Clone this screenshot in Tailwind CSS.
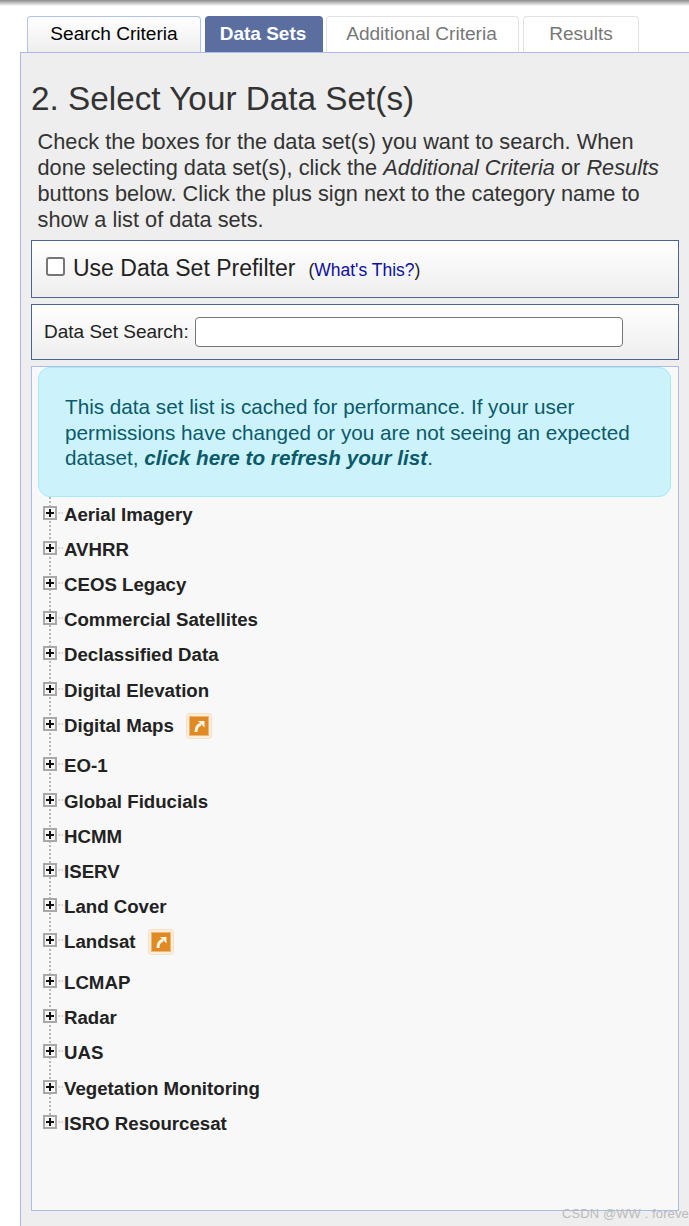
<!DOCTYPE html>
<html>
<head>
<meta charset="utf-8">
<script src="https://cdn.jsdelivr.net/npm/@tailwindcss/browser@4"></script>
</head>
<body class="bg-white font-['Liberation_Sans',Arial,sans-serif] text-[#333]">
<div class="w-[689px] h-[1226px] overflow-hidden relative bg-white">
  <div class="h-[6px] bg-gradient-to-b from-[#8c8c8c] to-white"></div>
  <div class="flex pl-[27px] mt-[10px] h-[36px] items-stretch">
    <div class="w-[174px] border border-b-0 border-[#b0c4e8] rounded-t-[4px] bg-gradient-to-b from-white to-[#eeeeee] text-[19.1px] text-black flex items-center justify-center">Search Criteria</div>
    <div class="ml-[4px] w-[118px] rounded-t-[4px] bg-[#5a6fa0] text-[19px] font-bold text-white flex items-center justify-center pr-[2px]">Data Sets</div>
    <div class="ml-[3px] w-[193px] border border-b-0 border-[#e2e2e2] rounded-t-[4px] text-[19.1px] text-[#777] flex items-center justify-center pr-[2px]">Additional Criteria</div>
    <div class="ml-[4px] w-[116px] border border-b-0 border-[#e2e2e2] rounded-t-[4px] text-[19.1px] text-[#777] flex items-center justify-center">Results</div>
  </div>
  <div class="ml-[20px] w-[669px] h-[1174px] border-l border-t border-[#a9bde6] bg-[#eeeeee] pl-[10px] pr-[10px]">
    <h1 class="text-[33.3px] leading-[38px] pt-[27px] text-[#333] m-0">2. Select Your Data Set(s)</h1>
    <p class="text-[21.75px] leading-[26px] text-[#333] pl-[6.5px] mt-[11px]">Check the boxes for the data set(s) you want to search. When done selecting data set(s), click the <i>Additional Criteria</i> or <i>Results</i> buttons below. Click the plus sign next to the category name to show a list of data sets.</p>
    <div class="mt-[7px] h-[58px] border border-[#4a6496] bg-gradient-to-b from-white to-[#eeeeee] flex items-center pl-[14px]">
      <span class="w-[19px] h-[19px] -mt-[6px] border-2 border-[#767676] rounded-[3px] bg-white"></span>
      <span class="text-[23px] ml-[8px] -mt-[2px] text-[#222]">Use Data Set Prefilter</span>
      <span class="text-[17.5px] ml-[13px] mt-[2px] text-[#222]">(<a class="text-[#0f0f9e]">What's This?</a>)</span>
    </div>
    <div class="mt-[6px] h-[56px] border border-[#4a6496] bg-gradient-to-b from-white to-[#eeeeee] flex items-center pl-[12px]">
      <span class="text-[19px] text-[#222]">Data Set Search:</span>
      <span class="ml-[6px] w-[428px] h-[30px] border border-[#767676] rounded-[4px] bg-white"></span>
    </div>
    <div class="mt-[6px] h-[845px] border border-[#a9bde6] bg-[#f8f8f8] pl-[6px] pr-[7px] relative">
      <div class="h-[130px] bg-[#ccf3fb] border border-[#a6ebf8] rounded-[12px] pl-[26px] pr-[20px] pt-[26px] text-[20.7px] leading-[25.5px] text-[#0a5a6a]">This data set list is cached for performance. If your user permissions have changed or you are not seeing an expected dataset, <b><i>click here to refresh your list</i></b>.</div>
      <div class="absolute left-[17px] top-[130px] w-0 h-[626px] border-l-2 border-dotted border-[#b5b5b5]"></div>
      <ul class="relative pl-[5px] text-[18.67px] font-bold text-[#222]">
        <li class="h-[35.2px] flex items-center"><svg class="w-[21px] h-[35px] shrink-0 -mt-[3px]" viewBox="0 0 21 35"><rect x="1" y="11" width="12" height="12" fill="#f7f7f7" stroke="#a8a8a8" stroke-width="2"/><path d="M3 17h8M7 13v8" stroke="#111" stroke-width="2"/><path d="M15.5 17h5" stroke="#aaa" stroke-dasharray="1.5 1.5"/></svg><span class="whitespace-nowrap">Aerial Imagery</span></li>
        <li class="h-[35.2px] flex items-center"><svg class="w-[21px] h-[35px] shrink-0 -mt-[3px]" viewBox="0 0 21 35"><rect x="1" y="11" width="12" height="12" fill="#f7f7f7" stroke="#a8a8a8" stroke-width="2"/><path d="M3 17h8M7 13v8" stroke="#111" stroke-width="2"/><path d="M15.5 17h5" stroke="#aaa" stroke-dasharray="1.5 1.5"/></svg><span class="whitespace-nowrap">AVHRR</span></li>
        <li class="h-[35.2px] flex items-center"><svg class="w-[21px] h-[35px] shrink-0 -mt-[3px]" viewBox="0 0 21 35"><rect x="1" y="11" width="12" height="12" fill="#f7f7f7" stroke="#a8a8a8" stroke-width="2"/><path d="M3 17h8M7 13v8" stroke="#111" stroke-width="2"/><path d="M15.5 17h5" stroke="#aaa" stroke-dasharray="1.5 1.5"/></svg><span class="whitespace-nowrap">CEOS Legacy</span></li>
        <li class="h-[35.2px] flex items-center"><svg class="w-[21px] h-[35px] shrink-0 -mt-[3px]" viewBox="0 0 21 35"><rect x="1" y="11" width="12" height="12" fill="#f7f7f7" stroke="#a8a8a8" stroke-width="2"/><path d="M3 17h8M7 13v8" stroke="#111" stroke-width="2"/><path d="M15.5 17h5" stroke="#aaa" stroke-dasharray="1.5 1.5"/></svg><span class="whitespace-nowrap">Commercial Satellites</span></li>
        <li class="h-[35.2px] flex items-center"><svg class="w-[21px] h-[35px] shrink-0 -mt-[3px]" viewBox="0 0 21 35"><rect x="1" y="11" width="12" height="12" fill="#f7f7f7" stroke="#a8a8a8" stroke-width="2"/><path d="M3 17h8M7 13v8" stroke="#111" stroke-width="2"/><path d="M15.5 17h5" stroke="#aaa" stroke-dasharray="1.5 1.5"/></svg><span class="whitespace-nowrap">Declassified Data</span></li>
        <li class="h-[35.2px] flex items-center"><svg class="w-[21px] h-[35px] shrink-0 -mt-[3px]" viewBox="0 0 21 35"><rect x="1" y="11" width="12" height="12" fill="#f7f7f7" stroke="#a8a8a8" stroke-width="2"/><path d="M3 17h8M7 13v8" stroke="#111" stroke-width="2"/><path d="M15.5 17h5" stroke="#aaa" stroke-dasharray="1.5 1.5"/></svg><span class="whitespace-nowrap">Digital Elevation</span></li>
        <li class="h-[40.7px] pb-[5.5px] flex items-center"><svg class="w-[21px] h-[35px] shrink-0 -mt-[3px]" viewBox="0 0 21 35"><rect x="1" y="11" width="12" height="12" fill="#f7f7f7" stroke="#a8a8a8" stroke-width="2"/><path d="M3 17h8M7 13v8" stroke="#111" stroke-width="2"/><path d="M15.5 17h5" stroke="#aaa" stroke-dasharray="1.5 1.5"/></svg><span class="whitespace-nowrap">Digital Maps</span><svg class="ml-[12.5px] w-[26px] h-[26px]" viewBox="0 0 26 26"><rect x="0.5" y="0.5" width="25" height="25" rx="3" fill="#fbeedd" stroke="#f6dfc2"/><rect x="3.5" y="3.5" width="19" height="19" fill="#e08a24" stroke="#eeb778"/><path d="M10 19c0-4 1-7 5-7.5" fill="none" stroke="#fdf3e6" stroke-width="3"/><path d="M12 8h6.5v6.5z" fill="#fdf3e6"/></svg></li>
        <li class="h-[35.2px] flex items-center"><svg class="w-[21px] h-[35px] shrink-0 -mt-[3px]" viewBox="0 0 21 35"><rect x="1" y="11" width="12" height="12" fill="#f7f7f7" stroke="#a8a8a8" stroke-width="2"/><path d="M3 17h8M7 13v8" stroke="#111" stroke-width="2"/><path d="M15.5 17h5" stroke="#aaa" stroke-dasharray="1.5 1.5"/></svg><span class="whitespace-nowrap">EO-1</span></li>
        <li class="h-[35.2px] flex items-center"><svg class="w-[21px] h-[35px] shrink-0 -mt-[3px]" viewBox="0 0 21 35"><rect x="1" y="11" width="12" height="12" fill="#f7f7f7" stroke="#a8a8a8" stroke-width="2"/><path d="M3 17h8M7 13v8" stroke="#111" stroke-width="2"/><path d="M15.5 17h5" stroke="#aaa" stroke-dasharray="1.5 1.5"/></svg><span class="whitespace-nowrap">Global Fiducials</span></li>
        <li class="h-[35.2px] flex items-center"><svg class="w-[21px] h-[35px] shrink-0 -mt-[3px]" viewBox="0 0 21 35"><rect x="1" y="11" width="12" height="12" fill="#f7f7f7" stroke="#a8a8a8" stroke-width="2"/><path d="M3 17h8M7 13v8" stroke="#111" stroke-width="2"/><path d="M15.5 17h5" stroke="#aaa" stroke-dasharray="1.5 1.5"/></svg><span class="whitespace-nowrap">HCMM</span></li>
        <li class="h-[35.2px] flex items-center"><svg class="w-[21px] h-[35px] shrink-0 -mt-[3px]" viewBox="0 0 21 35"><rect x="1" y="11" width="12" height="12" fill="#f7f7f7" stroke="#a8a8a8" stroke-width="2"/><path d="M3 17h8M7 13v8" stroke="#111" stroke-width="2"/><path d="M15.5 17h5" stroke="#aaa" stroke-dasharray="1.5 1.5"/></svg><span class="whitespace-nowrap">ISERV</span></li>
        <li class="h-[35.2px] flex items-center"><svg class="w-[21px] h-[35px] shrink-0 -mt-[3px]" viewBox="0 0 21 35"><rect x="1" y="11" width="12" height="12" fill="#f7f7f7" stroke="#a8a8a8" stroke-width="2"/><path d="M3 17h8M7 13v8" stroke="#111" stroke-width="2"/><path d="M15.5 17h5" stroke="#aaa" stroke-dasharray="1.5 1.5"/></svg><span class="whitespace-nowrap">Land Cover</span></li>
        <li class="h-[40.7px] pb-[5.5px] flex items-center"><svg class="w-[21px] h-[35px] shrink-0 -mt-[3px]" viewBox="0 0 21 35"><rect x="1" y="11" width="12" height="12" fill="#f7f7f7" stroke="#a8a8a8" stroke-width="2"/><path d="M3 17h8M7 13v8" stroke="#111" stroke-width="2"/><path d="M15.5 17h5" stroke="#aaa" stroke-dasharray="1.5 1.5"/></svg><span class="whitespace-nowrap">Landsat</span><svg class="ml-[12.5px] w-[26px] h-[26px]" viewBox="0 0 26 26"><rect x="0.5" y="0.5" width="25" height="25" rx="3" fill="#fbeedd" stroke="#f6dfc2"/><rect x="3.5" y="3.5" width="19" height="19" fill="#e08a24" stroke="#eeb778"/><path d="M10 19c0-4 1-7 5-7.5" fill="none" stroke="#fdf3e6" stroke-width="3"/><path d="M12 8h6.5v6.5z" fill="#fdf3e6"/></svg></li>
        <li class="h-[35.2px] flex items-center"><svg class="w-[21px] h-[35px] shrink-0 -mt-[3px]" viewBox="0 0 21 35"><rect x="1" y="11" width="12" height="12" fill="#f7f7f7" stroke="#a8a8a8" stroke-width="2"/><path d="M3 17h8M7 13v8" stroke="#111" stroke-width="2"/><path d="M15.5 17h5" stroke="#aaa" stroke-dasharray="1.5 1.5"/></svg><span class="whitespace-nowrap">LCMAP</span></li>
        <li class="h-[35.2px] flex items-center"><svg class="w-[21px] h-[35px] shrink-0 -mt-[3px]" viewBox="0 0 21 35"><rect x="1" y="11" width="12" height="12" fill="#f7f7f7" stroke="#a8a8a8" stroke-width="2"/><path d="M3 17h8M7 13v8" stroke="#111" stroke-width="2"/><path d="M15.5 17h5" stroke="#aaa" stroke-dasharray="1.5 1.5"/></svg><span class="whitespace-nowrap">Radar</span></li>
        <li class="h-[35.2px] flex items-center"><svg class="w-[21px] h-[35px] shrink-0 -mt-[3px]" viewBox="0 0 21 35"><rect x="1" y="11" width="12" height="12" fill="#f7f7f7" stroke="#a8a8a8" stroke-width="2"/><path d="M3 17h8M7 13v8" stroke="#111" stroke-width="2"/><path d="M15.5 17h5" stroke="#aaa" stroke-dasharray="1.5 1.5"/></svg><span class="whitespace-nowrap">UAS</span></li>
        <li class="h-[35.2px] flex items-center"><svg class="w-[21px] h-[35px] shrink-0 -mt-[3px]" viewBox="0 0 21 35"><rect x="1" y="11" width="12" height="12" fill="#f7f7f7" stroke="#a8a8a8" stroke-width="2"/><path d="M3 17h8M7 13v8" stroke="#111" stroke-width="2"/><path d="M15.5 17h5" stroke="#aaa" stroke-dasharray="1.5 1.5"/></svg><span class="whitespace-nowrap">Vegetation Monitoring</span></li>
        <li class="h-[35.2px] flex items-center"><svg class="w-[21px] h-[35px] shrink-0 -mt-[3px]" viewBox="0 0 21 35"><rect x="1" y="11" width="12" height="12" fill="#f7f7f7" stroke="#a8a8a8" stroke-width="2"/><path d="M3 17h8M7 13v8" stroke="#111" stroke-width="2"/><path d="M15.5 17h5" stroke="#aaa" stroke-dasharray="1.5 1.5"/></svg><span class="whitespace-nowrap">ISRO Resourcesat</span></li>
      </ul>
    </div>
  </div>
  <div class="absolute left-[562px] top-[1204px] text-[13px] tracking-[0.1px] text-[#bbb] whitespace-nowrap">CSDN @WW . forever</div>
</div>
</body>
</html>
